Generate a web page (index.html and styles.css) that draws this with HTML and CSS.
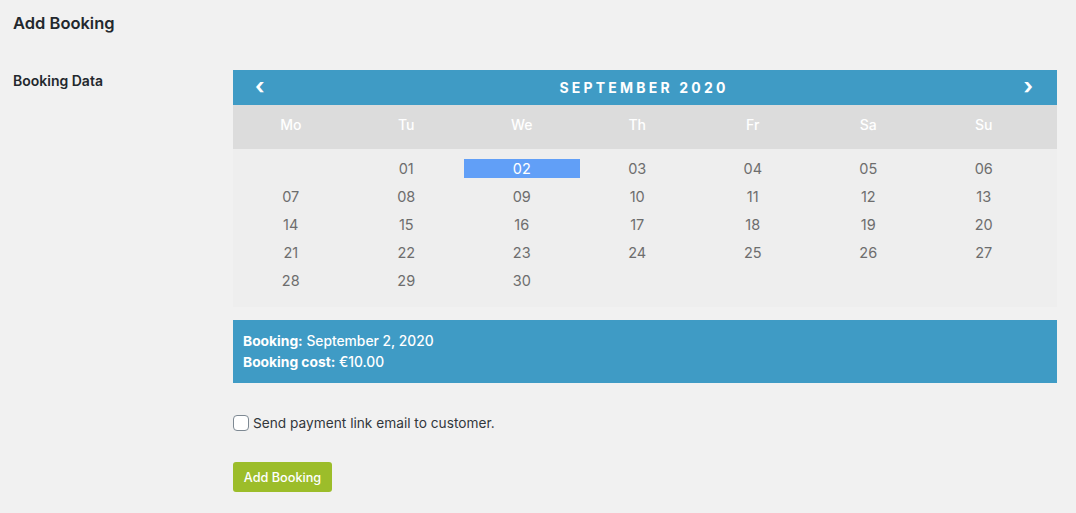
FILE: index.html
```html
<!DOCTYPE html>
<html>
<head>
<meta charset="utf-8">
<link rel="stylesheet" href="styles.css">
</head>
<body>
<div class="wrap">
  <h1 class="title">Add Booking</h1>
  <div class="form-row">
    <div class="label">Booking Data</div>
    <div class="field">
      <div class="calendar">
        <div class="cal-head">
          <span class="arrow">&#8249;</span>
          <span class="month">September 2020</span>
          <span class="arrow">&#8250;</span>
        </div>
        <div class="cal-days">
          <span>Mo</span><span>Tu</span><span>We</span><span>Th</span><span>Fr</span><span>Sa</span><span>Su</span>
        </div>
        <div class="cal-body">
          <span></span><span>01</span><span class="sel">02</span><span>03</span><span>04</span><span>05</span><span>06</span>
          <span>07</span><span>08</span><span>09</span><span>10</span><span>11</span><span>12</span><span>13</span>
          <span>14</span><span>15</span><span>16</span><span>17</span><span>18</span><span>19</span><span>20</span>
          <span>21</span><span>22</span><span>23</span><span>24</span><span>25</span><span>26</span><span>27</span>
          <span>28</span><span>29</span><span>30</span>
        </div>
      </div>
      <div class="summary">
        <div><b>Booking:</b> September 2, 2020</div>
        <div><b>Booking cost:</b> €10.00</div>
      </div>
      <label class="check"><span class="box"></span>Send payment link email to customer.</label>
      <button class="btn">Add Booking</button>
    </div>
  </div>
</div>
</body>
</html>
```

FILE: styles.css
```css
* { box-sizing: border-box; }
html, body { margin: 0; padding: 0; background: #f1f1f1; }
body {
  font-family: Inter, "Noto Sans", "Liberation Sans", sans-serif;
  color: #23282d;
}
.wrap { padding: 13px 19px 0 13px; }
.title {
  margin: 0;
  font-size: 16.5px;
  font-weight: 600;
  line-height: 21px;
  color: #23282d;
}
.form-row {
  display: flex;
  margin-top: 36px;
}
.label {
  width: 220px;
  font-size: 14px;
  font-weight: 600;
  line-height: 16px;
  padding-top: 3px;
}
.field { flex: 1; }
.calendar { width: 824px; }
.cal-head {
  height: 35px;
  background: #3f9bc5;
  color: #fff;
  display: flex;
  align-items: center;
  justify-content: space-between;
  padding: 0 24px 0 22px;
}
.arrow {
  font-size: 22px;
  font-weight: 700;
  line-height: 20px;
  position: relative;
  top: -2px;
}
.month {
  text-transform: uppercase;
  font-size: 14px;
  font-weight: 700;
  letter-spacing: 3.2px;
}
.cal-days {
  height: 44px;
  background: #dcdcdc;
  display: grid;
  grid-template-columns: repeat(7, 115.5px);
  align-items: center;
  padding-bottom: 6px;
  color: #fff;
  font-size: 14px;
  font-weight: 500;
}
.cal-days span { text-align: center; }
.cal-body {
  background: #eeeeee;
  display: grid;
  grid-template-columns: repeat(7, 115.5px);
  grid-auto-rows: 28px;
  padding: 10px 0 8px;
  color: #6d6d6d;
  font-size: 14.5px;
}
.cal-body span {
  text-align: center;
  height: 19px;
  line-height: 19px;
}
.cal-body .sel {
  background: #619ff7;
  color: #fff;
}
.summary {
  margin-top: 13px;
  width: 824px;
  height: 63px;
  background: #3f9bc5;
  color: #fff;
  font-size: 13.8px;
  font-weight: 500;
  line-height: 21px;
  padding: 11px 10px;
}
.summary b { font-weight: 700; }
.check {
  display: flex;
  align-items: center;
  margin-top: 31px;
  font-size: 13.7px;
  color: #32373c;
  line-height: 18px;
}
.box {
  width: 16px;
  height: 16px;
  border: 1px solid #7e8993;
  border-radius: 4px;
  background: #fff;
  margin-right: 4px;
}
.btn {
  display: block;
  margin-top: 30px;
  height: 30px;
  width: 99px;
  border: none;
  border-radius: 3px;
  background: #9cbd2a;
  color: #fff;
  font-family: inherit;
  font-size: 12.7px;
  font-weight: 500;
  padding: 0;
}
```
